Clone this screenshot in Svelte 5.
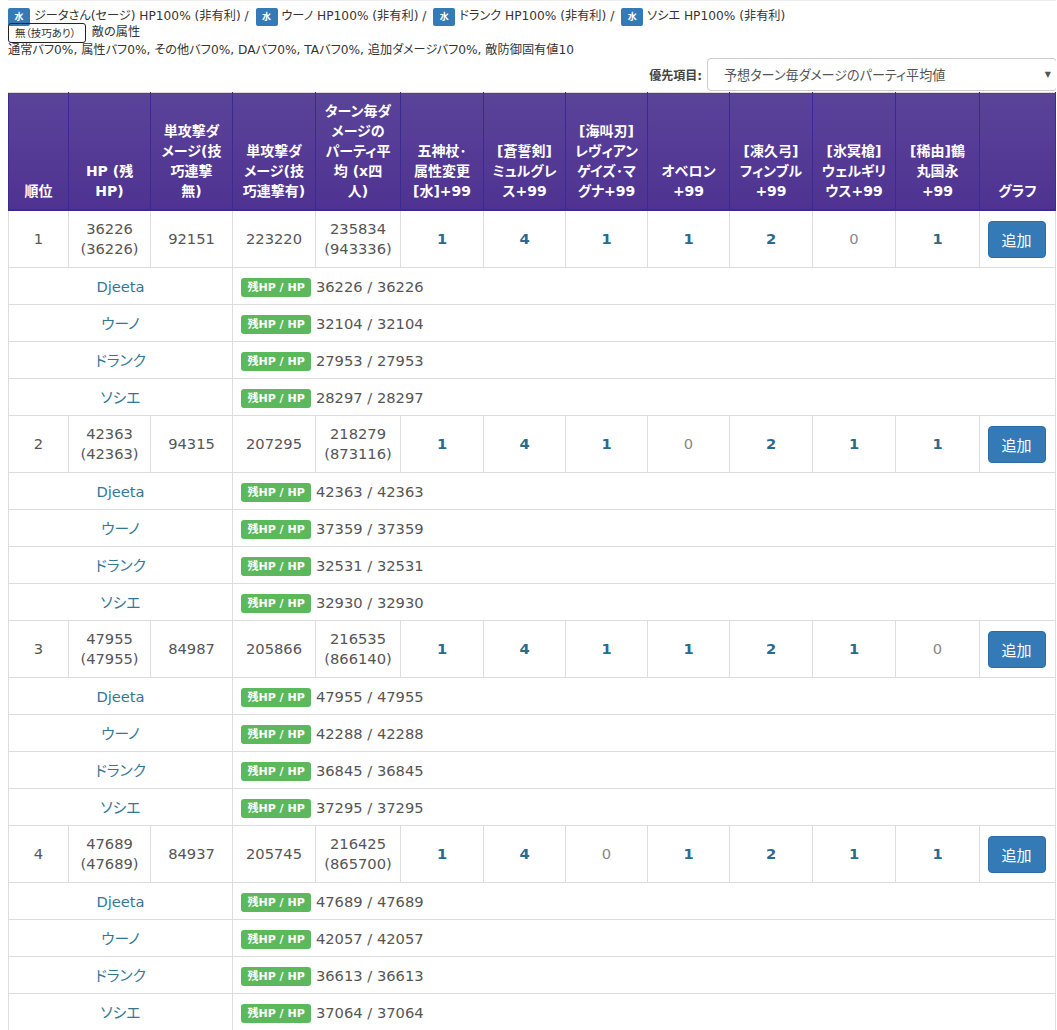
<script>
  const headers = [
    ["順位"],
    ["HP (残", "HP)"],
    ["単攻撃ダ", "メージ(技", "巧連撃", "無)"],
    ["単攻撃ダ", "メージ(技", "巧連撃有)"],
    ["ターン毎ダ", "メージの", "パーティ平", "均 (x四", "人)"],
    ["五神杖･", "属性変更", "[水]+99"],
    ["[蒼誓剣]", "ミュルグレ", "ス+99"],
    ["[海叫刃]", "レヴィアン", "ゲイズ･マ", "グナ+99"],
    ["オベロン", "+99"],
    ["[凍久弓]", "フィンブル", "+99"],
    ["[氷冥槍]", "ウェルギリ", "ウス+99"],
    ["[稀由]鶴", "丸国永", "+99"],
    ["グラフ"],
  ];
  const names = ["Djeeta", "ウーノ", "ドランク", "ソシエ"];
  const party = ["ジータさん(セージ)", "ウーノ", "ドランク", "ソシエ"];
  const rows = [
    { hp: 36226, single: 92151, combo: 223220, avg: 235834, total: 943336, counts: [1, 4, 1, 1, 2, 0, 1], members: [36226, 32104, 27953, 28297] },
    { hp: 42363, single: 94315, combo: 207295, avg: 218279, total: 873116, counts: [1, 4, 1, 0, 2, 1, 1], members: [42363, 37359, 32531, 32930] },
    { hp: 47955, single: 84987, combo: 205866, avg: 216535, total: 866140, counts: [1, 4, 1, 1, 2, 1, 0], members: [47955, 42288, 36845, 37295] },
    { hp: 47689, single: 84937, combo: 205745, avg: 216425, total: 865700, counts: [1, 4, 0, 1, 2, 1, 1], members: [47689, 42057, 36613, 37064] },
  ];
</script>

<div class="page">
  <div class="summary">
    <div class="members">
      {#each party as p, i}
        <span class="elem">水</span> {p} HP100% (非有利){#if i < party.length - 1}{" / "}{/if}
      {/each}
    </div>
    <div class="enemy"><span class="enemy-box">無（技巧あり）</span> 敵の属性</div>
    <div>通常バフ0%, 属性バフ0%, その他バフ0%, DAバフ0%, TAバフ0%, 追加ダメージバフ0%, 敵防御固有値10</div>
  </div>
  <div class="priority">
    <label for="sort">優先項目:</label>
    <div id="sort" class="select">予想ターン毎ダメージのパーティ平均値<span class="caret">▼</span></div>
  </div>
  <table>
    <colgroup>
      <col style="width:60px" /><col style="width:82px" /><col style="width:82px" /><col style="width:83px" /><col style="width:85px" />
      <col style="width:83px" /><col style="width:82px" /><col style="width:82px" /><col style="width:82px" /><col style="width:83px" />
      <col style="width:83px" /><col style="width:84px" /><col style="width:76px" />
    </colgroup>
    <thead>
      <tr>
        {#each headers as lines}
          <th>{#each lines as line, k}{#if k > 0}<br />{/if}{line}{/each}</th>
        {/each}
      </tr>
    </thead>
    <tbody>
      {#each rows as r, i}
        <tr class="main">
          <td>{i + 1}</td>
          <td>{r.hp}<br />({r.hp})</td>
          <td>{r.single}</td>
          <td>{r.combo}</td>
          <td>{r.avg}<br />({r.total})</td>
          {#each r.counts as c}
            <td class:count={c > 0} class:zero={c === 0}>{c}</td>
          {/each}
          <td class="action"><button>追加</button></td>
        </tr>
        {#each names as n, j}
          <tr class="sub">
            <td colspan="3" class="name">{n}</td>
            <td colspan="10" class="hp"><span class="label">残HP / HP</span> {r.members[j]} / {r.members[j]}</td>
          </tr>
        {/each}
      {/each}
    </tbody>
  </table>
</div>

<style>
  :global(body) {
    margin: 0;
    background: #fff;
    color: #444;
    font-family: "DejaVu Sans", "Noto Sans CJK JP", sans-serif;
    font-feature-settings: "palt";
    font-size: 14px;
    line-height: 1.43;
  }
  .page {
    width: 1048px;
    margin-left: 8px;
    height: 1030px;
    overflow: hidden;
  }
  .summary {
    margin-left: -8px;
    padding-left: 8px;
    border-top: 1px solid #eee;
    padding-top: 6px;
    font-size: 12.2px;
    line-height: 17px;
    color: #333;
  }
  .members {
    height: 17px;
    padding-top: 1px;
    margin-bottom: -1px;
    white-space: nowrap;
  }
  .elem {
    display: inline-block;
    background: #337ab7;
    color: #fff;
    font-size: 9px;
    font-weight: bold;
    line-height: 18px;
    height: 18px;
    width: 22px;
    text-align: center;
    border-radius: 2px;
    vertical-align: top;
    margin-left: 3px;
  }
  .members .elem:first-child {
    margin-left: 0;
  }
  .enemy {
    height: 18px;
  }
  .enemy-box {
    display: inline-block;
    width: 70px;
    height: 18px;
    line-height: 18px;
    border: 1px solid #222;
    border-radius: 3px;
    font-size: 10.5px;
    padding-left: 6px;
    margin-top: -1px;
    margin-right: 2px;
    vertical-align: top;
  }
  .priority {
    display: flex;
    justify-content: flex-end;
    align-items: flex-start;
    gap: 5px;
    height: 33px;
    font-size: 12px;
    font-weight: bold;
  }
  .priority label {
    margin-top: 9px;
  }
  .select {
    width: 350px;
    height: 33px;
    line-height: 33px;
    box-sizing: border-box;
    border: 1px solid #ccc;
    border-radius: 4px;
    padding-left: 16px;
    font-size: 13.1px;
    font-weight: normal;
    color: #555;
    position: relative;
    margin-right: -1px;
    margin-top: -1px;
    background: #fff;
  }
  .caret {
    position: absolute;
    right: 5px;
    top: -1px;
    font-size: 8px;
    color: #555;
  }
  table {
    border-collapse: collapse;
    table-layout: fixed;
    width: 1047px;
    border-left: 1px solid #3a2a96;
    border-right: 1px solid #3a2a96;
  }
  th {
    background: linear-gradient(#5a4399, #4f3291);
    color: #fff;
    font-size: 14px;
    line-height: 20px;
    font-weight: bold;
    vertical-align: bottom;
    text-align: center;
    padding: 8px 2px;
    border: 1px solid #3a2a96;
    border-bottom-width: 2px;
    border-top: 1px solid #ddd;
    white-space: nowrap;
  }
  td {
    border: 1px solid #ddd;
    text-align: center;
    vertical-align: middle;
    padding: 8px 2px;
    font-size: 14.7px;
    line-height: 20px;
    color: #555;
  }
  .main td {
    height: 40px;
  }
  td.count {
    color: #2a6a8c;
    font-weight: bold;
  }
  td.zero {
    color: #888;
  }
  td.action {
    padding-right: 4px;
    padding-left: 2px;
  }
  .sub td {
    height: 20px;
    padding-top: 9px;
    padding-bottom: 7px;
  }
  td.name {
    color: #337795;
  }
  td.hp {
    text-align: left;
    padding-left: 8px;
  }
  .label {
    display: inline-block;
    background: #5cb85c;
    color: #fff;
    font-size: 11px;
    font-weight: bold;
    line-height: 19px;
    height: 19px;
    padding: 0 6.5px;
    margin: 1px 0 0;
    border-radius: 3px;
    vertical-align: top;
  }
  button {
    width: 58px;
    height: 37px;
    background: #337ab7;
    color: #fff;
    border: 1px solid #2e6da4;
    border-radius: 4px;
    font-family: inherit;
    font-size: 15px;
    padding: 0;
    vertical-align: middle;
  }
</style>
